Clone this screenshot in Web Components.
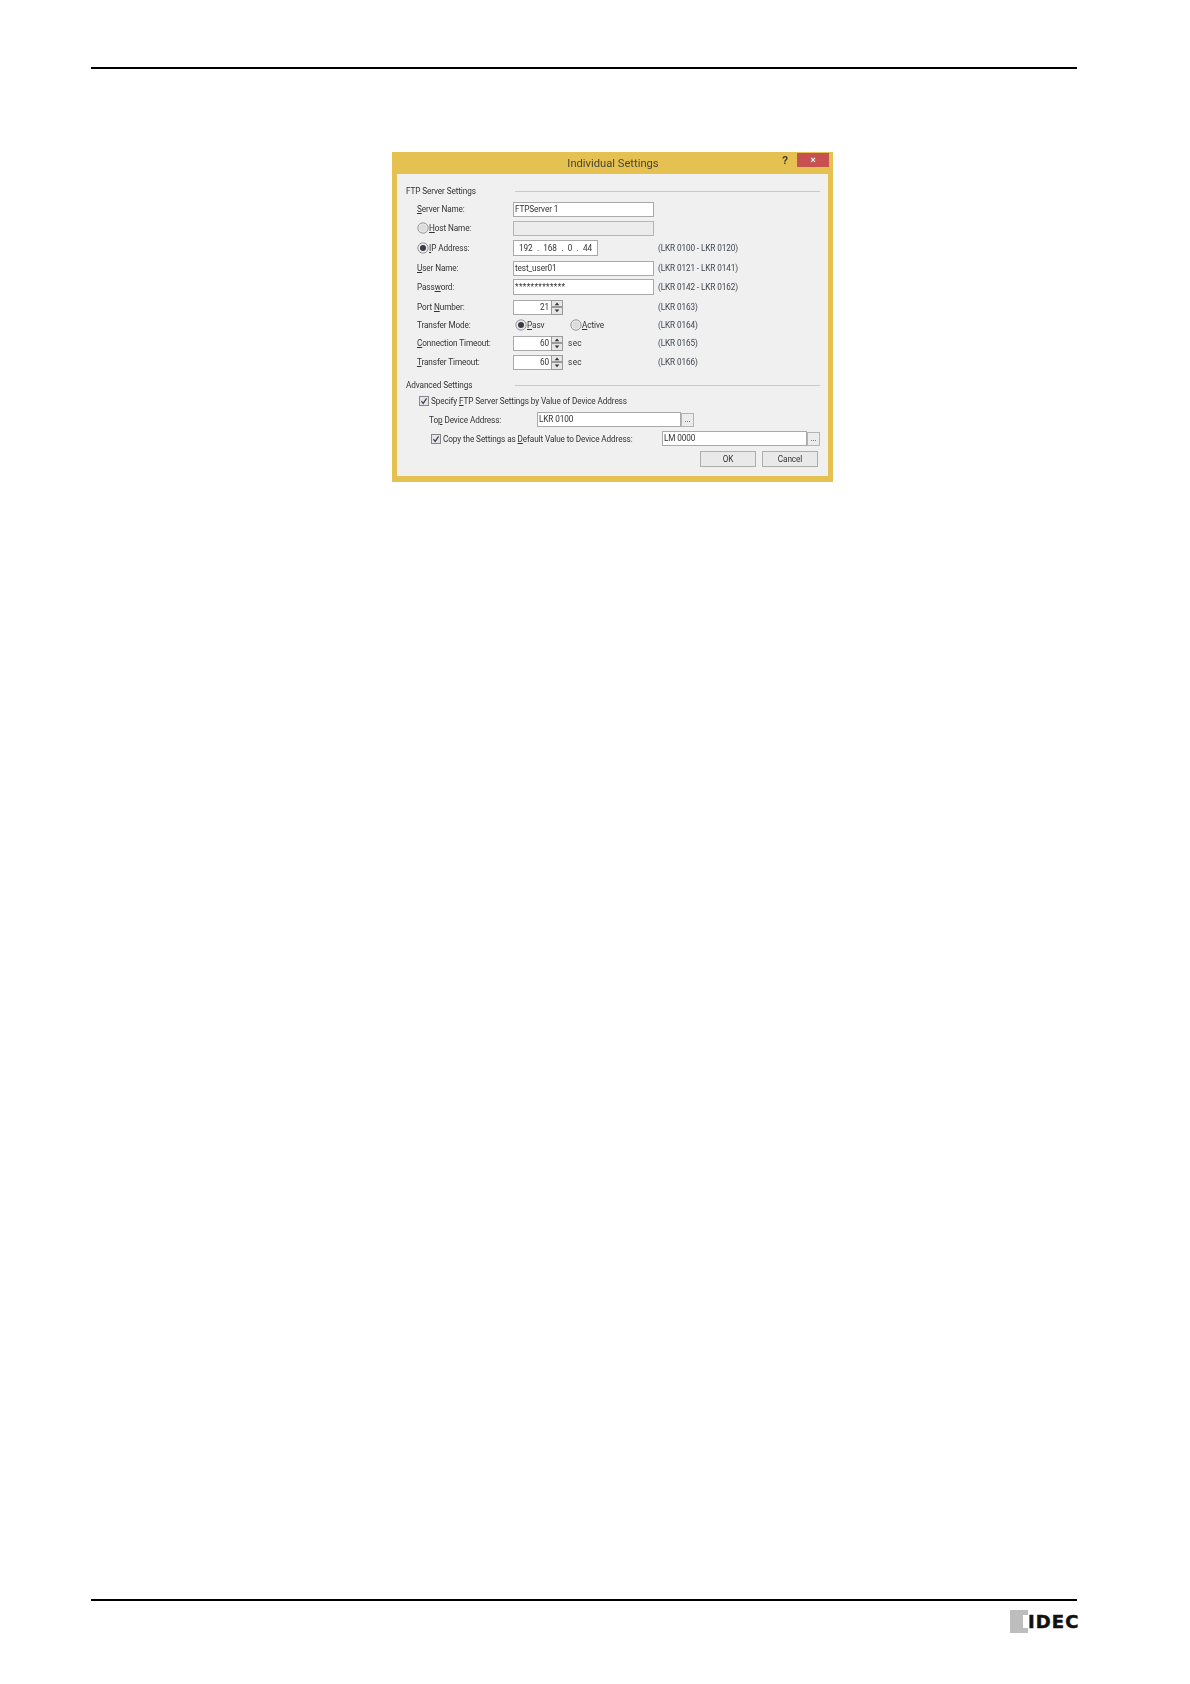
<!DOCTYPE html>
<html lang="en"><head><meta charset="utf-8"><title>Individual Settings</title>
<style>
html,body{margin:0;background:#fff}
body{font-family:Roboto,"Open Sans",sans-serif;font-size:8.2px;letter-spacing:-.1px;color:#333}
u{text-underline-offset:1px;text-decoration-thickness:.7px}
</style></head><body>
<x-page>
<x-dialog heading="Individual Settings">
  <x-section heading="FTP Server Settings"></x-section>
  <x-row gap="2" label="Server Name:" mn="S"><x-field w="141" h="15">FTPServer 1</x-field></x-row>
  <x-row gap="1" label="Host Name:" mn="H" radio="off"><x-field w="141" h="15" disabled></x-field></x-row>
  <x-row gap="2" label="IP Address:" mn="I" radio="on" note="(LKR 0100 - LKR 0120)"><x-field w="85" h="16" ip><span>192</span><span>.</span><span>168</span><span>.</span><span>0</span><span>.</span><span>44</span></x-field></x-row>
  <x-row gap="2" label="User Name:" mn="U" note="(LKR 0121 - LKR 0141)"><x-field w="141" h="15">test_user01</x-field></x-row>
  <x-row gap="1" label="Password:" mn="w" note="(LKR 0142 - LKR 0162)"><x-field w="141" h="16" style="letter-spacing:.35px">*************</x-field></x-row>
  <x-row gap="2" label="Port Number:" mn="N" note="(LKR 0163)"><x-spin value="21"></x-spin></x-row>
  <x-row gap="0" label="Transfer Mode:" note="(LKR 0164)"><x-choice checked label="Pasv" mn="P" w="55"></x-choice><x-choice label="Active" mn="A" w="60"></x-choice></x-row>
  <x-row gap="0" label="Connection Timeout:" mn="C" note="(LKR 0165)"><x-spin value="60" unit="sec"></x-spin></x-row>
  <x-row gap="1" label="Transfer Timeout:" mn="T" note="(LKR 0166)"><x-spin value="60" unit="sec"></x-spin></x-row>
  <x-section heading="Advanced Settings" style="margin-top:7px"></x-section>
  <x-check indent="13" style="margin-top:2px"><span>Specify <u>F</u>TP Server Settings by Value of Device Address</span></x-check>
  <x-addr indent="23" label="Top Device Address:" mn="p" value="LKR 0100" lw="108" w="144" style="margin-top:4px"></x-addr>
  <x-addr indent="25" check label="Copy the Settings as Default Value to Device Address:" mn="D" value="LM 0000" lw="231" w="145" style="margin-top:4px"></x-addr>
  <x-actions><x-btn>OK</x-btn><x-btn>Cancel</x-btn></x-actions>
</x-dialog>
</x-page>
<script>
function mnem(text,m){
  if(!m) return text;
  const i=text.indexOf(m);
  return i<0?text:text.slice(0,i)+'<u>'+m+'</u>'+text.slice(i+m.length);
}
function def(name,css,render){
  customElements.define(name,class extends HTMLElement{
    connectedCallback(){
      if(this.shadowRoot) return;
      const s=this.attachShadow({mode:'open'});
      s.innerHTML='<style>'+css+' u{text-underline-offset:1px;text-decoration-thickness:.7px} svg{flex:none}</style>'+render(this);
    }
  });
}
const radioSvg=on=>`<svg width="12" height="12" viewBox="0 0 12 12" aria-hidden="true"><circle cx="6" cy="6" r="5.2" fill="#e9e9e9" stroke="#8d8d8d" stroke-width=".9"/>${on?'<circle cx="6" cy="6" r="3" fill="#3c3c46"/>':'<circle cx="6" cy="6" r="3.4" fill="#dcdcdc"/>'}</svg>`;
const checkSvg=`<svg width="10" height="10" viewBox="0 0 10 10" aria-hidden="true"><rect x=".5" y=".5" width="9" height="9" fill="#e6e6ea" stroke="#85858a"/><path d="M2.4 5.2 4.2 7.4 7.6 2.4" fill="none" stroke="#3e3e48" stroke-width="1.2"/></svg>`;

def('x-page',`:host{display:flex;flex-direction:column;box-sizing:border-box;height:1684px;padding:67px 113px 0 91px}
.rule{height:2px;background:#000;flex:none}
.main{flex:1;padding:83px 0 0 301px}
.foot{flex:none;height:85px}
.logo{display:flex;justify-content:flex-end;margin:9px -1px 0 0}
`,()=>`<div class="rule"></div><div class="main"><slot></slot></div><div class="foot"><div class="rule"></div><div class="logo"><x-logo></x-logo></div></div>`);

def('x-logo',`:host{display:flex;align-items:center;height:23px}
.mark{width:18px;height:23px;background:#bdbdbd;display:flex;justify-content:flex-end;align-items:center}
.mark i{display:block;width:5px;height:13px;background:#fff}
.t{font:700 18px/23px "DejaVu Sans",sans-serif;color:#111;width:50px;white-space:nowrap;letter-spacing:1.1px;-webkit-text-stroke:.5px #111}
`,()=>`<div class="mark"><i></i></div><div class="t">IDEC</div>`);

def('x-dialog',`:host{display:block;width:441px;box-sizing:border-box;background:#e5c152;border:solid #e5c152;border-width:0 5px 6px 5px;filter:blur(.4px)}
.bar{height:22px;display:flex;align-items:flex-start}
.title{flex:1;text-align:center;font-size:11.2px;letter-spacing:0;line-height:24px;color:#4a4536;padding-left:47px}
.help{font:700 10px/17px "Liberation Sans",sans-serif;color:#333;width:10px;margin-right:5px}
.close{width:32px;height:14px;margin-top:1px;background:#c75050;color:#fff;font:700 9px/14px "Liberation Sans",sans-serif;text-align:center;margin-right:-1px}
.body{background:#f0f0f0;height:302px;padding:0 8px 0 9px;box-sizing:border-box;display:flex;flex-direction:column}
`,h=>`<div class="bar"><div class="title">${h.getAttribute('heading')}</div><div class="help">?</div><div class="close">×</div></div><div class="body"><slot></slot></div>`);

def('x-section',`:host{display:grid;grid-template-columns:109px 1fr;align-items:center;height:14px;margin-top:10px;flex:none;white-space:nowrap}
i{display:block;height:1px;background:#c9c9c9}`,h=>`<span>${h.getAttribute('heading')}</span><i></i>`);

def('x-row',`:host{display:grid;grid-template-columns:96px 145px 1fr;align-items:center;height:18px;padding-left:11px;flex:none;white-space:nowrap}
.l{display:flex;align-items:center}
.c{display:flex;align-items:center}
.n{color:#3f4650}`,h=>{
  h.style.marginTop=h.getAttribute('gap')+'px';
  const r=h.getAttribute('radio');
  return `<div class="l">${r?radioSvg(r==='on'):''}<span>${mnem(h.getAttribute('label'),h.getAttribute('mn'))}</span></div><div class="c"><slot></slot></div><div class="n">${h.getAttribute('note')||''}</div>`;
});

def('x-field',`:host{display:flex;align-items:center;box-sizing:border-box;background:#fff;border:1px solid #a9a9a9;padding:0 1px;white-space:nowrap;color:#333;flex:none}
:host([disabled]){background:#ececec;border-color:#b5b5b5}
:host([ip]){justify-content:space-between;padding:0 5px}`,h=>{
  h.style.width=h.getAttribute('w')+'px';h.style.height=h.getAttribute('h')+'px';
  return '<slot></slot>';
});

def('x-spin',`:host{display:flex;align-items:center;white-space:nowrap}
.v{box-sizing:border-box;width:38px;height:15px;background:#fff;border:1px solid #a9a9a9;border-right:0;text-align:right;line-height:13px;padding-right:2px}
.s{display:flex;flex-direction:column;width:12px;height:15px;flex:none}
.s svg{display:block;box-sizing:border-box;width:12px;height:7.5px;background:#e6e6e6;border:1px solid #9a9a9a}
.u{margin-left:5px;letter-spacing:.4px}`,h=>`<div class="v">${h.getAttribute('value')}</div><div class="s"><svg viewBox="0 0 10 6"><path d="M5 1.5 7.5 4.5h-5z" fill="#333"/></svg><svg viewBox="0 0 10 6"><path d="M5 4.5 7.5 1.5h-5z" fill="#333"/></svg></div>${h.getAttribute('unit')?`<div class="u">${h.getAttribute('unit')}</div>`:''}`);

def('x-choice',`:host{display:flex;align-items:center;white-space:nowrap;padding-left:2px;box-sizing:border-box}`,h=>{
  h.style.width=h.getAttribute('w')+'px';
  return radioSvg(h.hasAttribute('checked'))+`<span>${mnem(h.getAttribute('label'),h.getAttribute('mn'))}</span>`;
});

def('x-check',`:host{display:flex;align-items:center;gap:2px;height:14px;white-space:nowrap;flex:none}`,h=>{
  h.style.paddingLeft=h.getAttribute('indent')+'px';
  return checkSvg+'<slot></slot>';
});

def('x-addr',`:host{display:flex;align-items:center;height:15px;white-space:nowrap;flex:none}
.l{display:flex;align-items:center;gap:2px;flex:none}
.i{box-sizing:border-box;height:15px;background:#fff;border:1px solid #a9a9a9;padding-left:1px;line-height:13px;color:#333;flex:none}
.b{box-sizing:border-box;width:13px;height:14px;border:1px solid #b4b4b4;background:#ececec;font-size:8px;line-height:12px;text-align:center;flex:none}`,h=>{
  h.style.paddingLeft=h.getAttribute('indent')+'px';
  return `<div class="l" style="width:${h.getAttribute('lw')}px">${h.hasAttribute('check')?checkSvg:''}<span>${mnem(h.getAttribute('label'),h.getAttribute('mn'))}</span></div><div class="i" style="width:${h.getAttribute('w')}px">${h.getAttribute('value')}</div><div class="b">...</div>`;
});

def('x-actions',`:host{display:flex;justify-content:flex-end;gap:6px;margin-top:5px;padding-right:2px;flex:none}`,()=>'<slot></slot>');
def('x-btn',`:host{display:block;box-sizing:border-box;width:56px;height:16px;border:1px solid #adadad;background:#e9e9e9;text-align:center;line-height:14px}`,()=>'<slot></slot>');
</script>
</body></html>
